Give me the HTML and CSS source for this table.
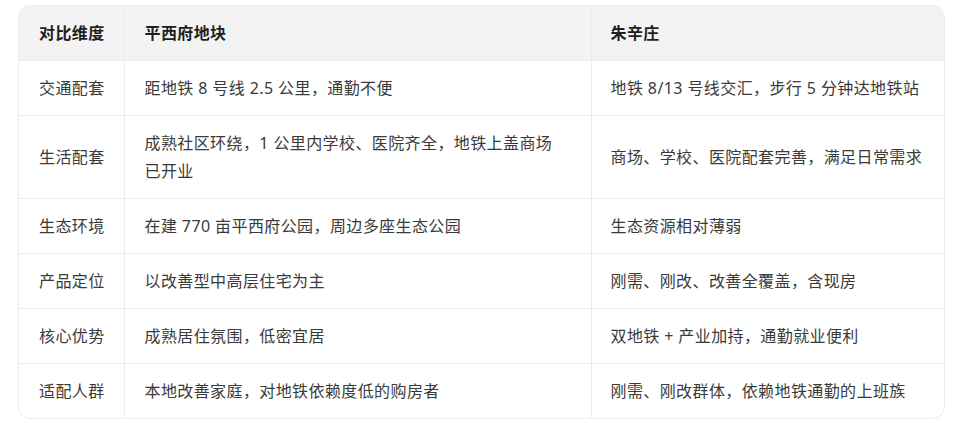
FILE: index.html
```html
<!DOCTYPE html>
<html lang="zh-CN">
<head>
<meta charset="utf-8">
<link rel="stylesheet" href="styles.css">
</head>
<body>
<div class="wrap">
  <table class="cmp">
    <colgroup>
      <col class="c1"><col class="c2"><col class="c3">
    </colgroup>
    <thead>
      <tr><th>对比维度</th><th>平西府地块</th><th>朱辛庄</th></tr>
    </thead>
    <tbody>
      <tr><td>交通配套</td><td>距地铁 8 号线 2.5 公里，通勤不便</td><td>地铁 8/13 号线交汇，步行 5 分钟达地铁站</td></tr>
      <tr><td>生活配套</td><td>成熟社区环绕，1 公里内学校、医院齐全，地铁上盖商场已开业</td><td>商场、学校、医院配套完善，满足日常需求</td></tr>
      <tr><td>生态环境</td><td>在建 770 亩平西府公园，周边多座生态公园</td><td>生态资源相对薄弱</td></tr>
      <tr><td>产品定位</td><td>以改善型中高层住宅为主</td><td>刚需、刚改、改善全覆盖，含现房</td></tr>
      <tr><td>核心优势</td><td>成熟居住氛围，低密宜居</td><td>双地铁 + 产业加持，通勤就业便利</td></tr>
      <tr><td>适配人群</td><td>本地改善家庭，对地铁依赖度低的购房者</td><td>刚需、刚改群体，依赖地铁通勤的上班族</td></tr>
    </tbody>
  </table>
</div>
</body>
</html>
```

FILE: styles.css
```css
html, body {
  margin: 0;
  padding: 0;
  background: #ffffff;
}
body {
  font-family: "Noto Sans", "Noto Sans CJK SC", sans-serif;
  font-size: 16px;
  letter-spacing: 0.4px;
  color: #3a3a3a;
}
.wrap {
  margin: 5px 0 0 18px;
  width: 927px;
  border: 1px solid #ececec;
  border-radius: 12px;
  overflow: hidden;
  box-sizing: border-box;
}
.cmp {
  width: 100%;
  border-collapse: collapse;
  table-layout: fixed;
}
.c1 { width: 105px; }
.c2 { width: 467px; }
.c3 { width: auto; }
.cmp th, .cmp td {
  text-align: left;
  vertical-align: middle;
  padding: 13px 30px 13px 20px;
  line-height: 28px;
  border-left: 1px solid #ececec;
  border-top: 1px solid #ececec;
}
.cmp th:first-child, .cmp td:first-child {
  border-left: none;
  padding-right: 8px;
  white-space: nowrap;
}
.cmp th:last-child, .cmp td:last-child {
  padding-left: 19px;
  padding-right: 10px;
}
.cmp thead th {
  border-top: none;
  background: #f3f3f3;
  font-weight: 700;
  color: #1f1f1f;
}
```
